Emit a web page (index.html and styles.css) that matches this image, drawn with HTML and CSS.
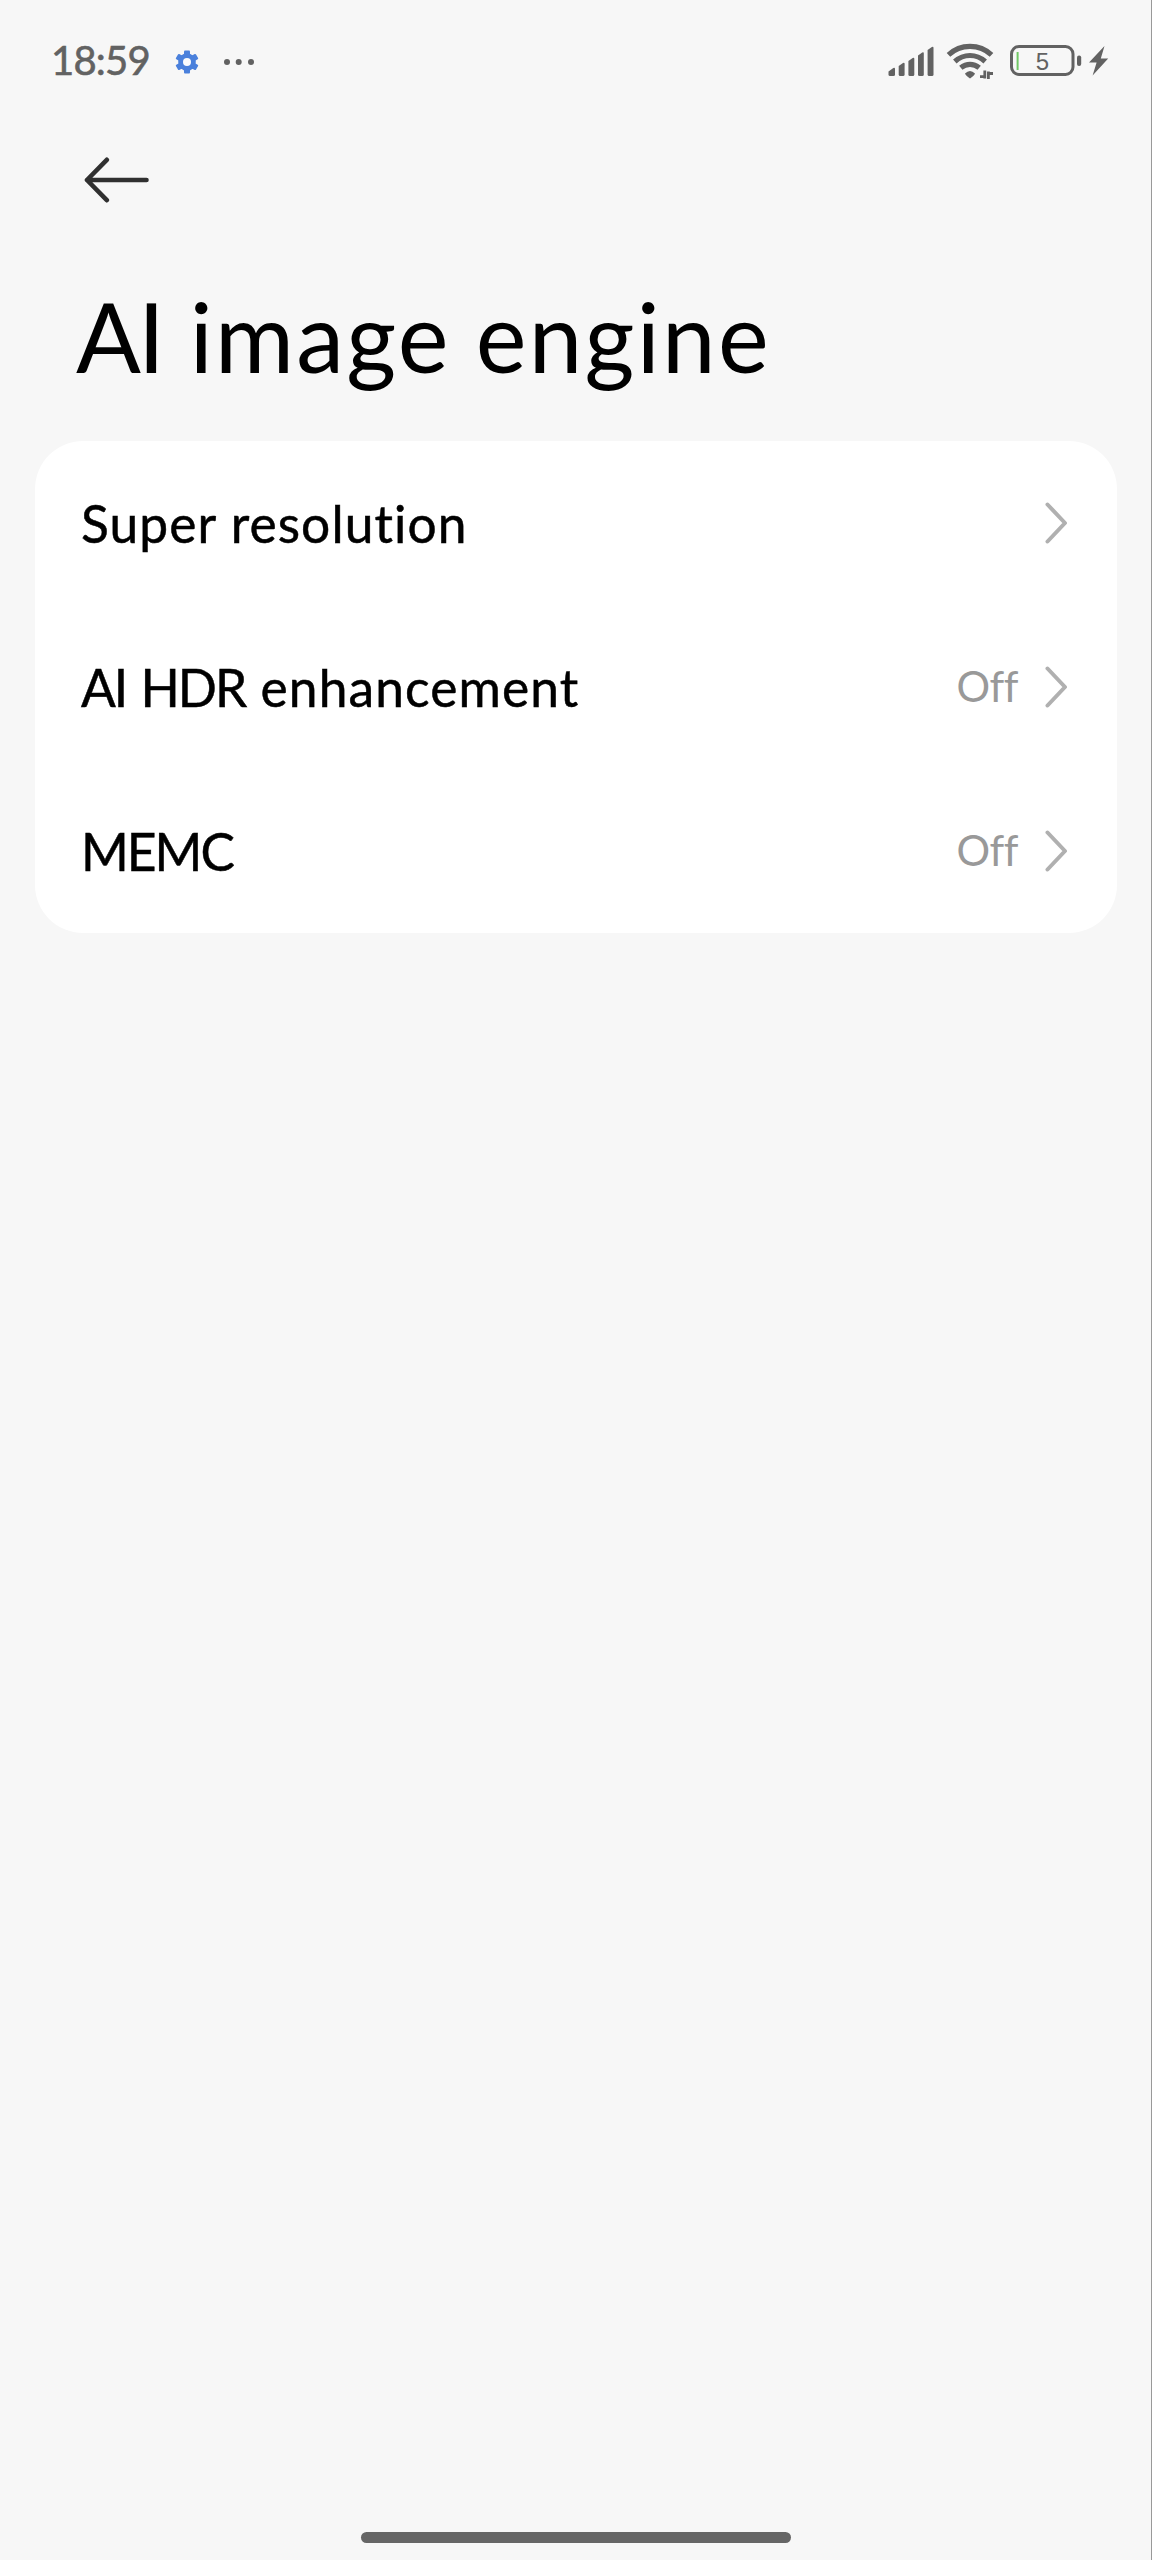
FILE: index.html
```html
<!doctype html>
<html lang="en">

<head>
  <meta charset="utf-8">
  <title>AI image engine</title>
  <link rel="stylesheet" href="styles.css">
</head>

<body>
  <div class="status">
    <span class="time">18:59</span>
    <svg class="gear" width="24" height="24" viewBox="-12 -12 24 24">
      <g fill="#4a80dc">
        <circle r="8.8"/>
        <rect x="-3" y="-11.6" width="6" height="23.2" rx="1"/>
        <rect x="-3" y="-11.6" width="6" height="23.2" rx="1" transform="rotate(60)"/>
        <rect x="-3" y="-11.6" width="6" height="23.2" rx="1" transform="rotate(120)"/>
      </g>
      <circle r="4" fill="#fafbfd"/>
    </svg>
    <svg class="more" width="32" height="8" viewBox="0 0 32 8" fill="#626262">
      <circle cx="4" cy="4" r="3"/><circle cx="15.7" cy="4" r="3"/><circle cx="28" cy="4" r="3"/>
    </svg>

    <svg class="signal" width="46" height="32" viewBox="0 0 46 32" fill="#626262">
      <path d="M0.5 26.5L5.3 23Q7 22 7 24V29.5Q7 31 5.5 31H2Q.5 31 .5 29.5Z"/>
      <path d="M10.700 21L15 18Q16.600 17.200 16.600 19V29.500Q16.600 31 15 31H12.200Q10.700 31 10.700 29.500Z"/>
      <path d="M20.400 16L24.700 13Q26.300 12.200 26.300 14V29.500Q26.300 31 24.800 31H21.900Q20.400 31 20.400 29.500Z"/>
      <path d="M30 10.500L34.200 7.500Q35.800 6.700 35.800 8.500V29.500Q35.800 31 34.300 31H31.500Q30 31 30 29.500Z"/>
      <path d="M39.600 5L43.900 2Q45.500 1.200 45.500 3V29.500Q45.500 31 44 31H41.100Q39.600 31 39.600 29.500Z"/>
    </svg>
    <svg class="wifi" width="48" height="38" viewBox="0 0 48 38" fill="none" stroke="#626262" stroke-width="5.2">
      <path d="M2.500 12.800Q11.500 4.300 24 4.300T45.500 12.800"/>
      <path d="M8.800 19.500Q15.500 13.500 24 13.500T39.200 19.500"/>
      <path d="M14.800 25.700Q19 22.300 24 22.300T33.200 25.700"/>
      <path d="M19 31.500Q24 26.500 29 31.500Q28.500 33.500 24 36.500Q19.500 33.500 19 31.500Z" fill="#626262" stroke="none"/>
      <path d="M38.800 28.500V36.500M34 34.600H38.800M42.400 37V29.500M42.400 31.500H47" stroke-width="2.800"/>
    </svg>
    <svg class="battery" width="72" height="32" viewBox="0 0 72 32">
      <rect x="1.500" y="1.500" width="61.500" height="28" rx="7.500" fill="none" stroke="#626262" stroke-width="3"/>
      <rect x="6.600" y="7" width="2" height="18" fill="#70c865"/>
      <rect x="67" y="10.500" width="4.200" height="10.500" rx="2" fill="#626262"/>
      <text x="32.500" y="24.500">5</text>
    </svg>
    <svg class="bolt" width="20" height="30" viewBox="0 0 20 30">
      <path d="M15.500 0L0 16.500H7.600L3.600 29.500L19.200 12.500H11.800Z" fill="#626262"/>
    </svg>
  </div>

  <div class="toolbar">
    <svg width="66" height="48" viewBox="0 0 66 48" fill="none" stroke="#303030" stroke-width="4.600" stroke-linecap="round" stroke-linejoin="round">
      <path d="M62.500 24H3M22.800 3.800L3 24L22.800 44.200"/>
    </svg>
  </div>

  <h1><span class="ai">AI</span> image engine</h1>

  <ul class="card">
    <li>
      <span class="label">Super resolution</span>
      <svg class="chevron" width="24" height="42" viewBox="0 0 24 42"><path d="M3.500 2.500L21 21L3.500 39.500"/></svg>
    </li>
    <li>
      <span class="label"><span class="caps">AI HDR</span> enhancement</span>
      <span class="value">Off</span>
      <svg class="chevron" width="24" height="42" viewBox="0 0 24 42"><path d="M3.500 2.500L21 21L3.500 39.500"/></svg>
    </li>
    <li>
      <span class="label"><span class="caps">MEMC</span></span>
      <span class="value">Off</span>
      <svg class="chevron" width="24" height="42" viewBox="0 0 24 42"><path d="M3.500 2.500L21 21L3.500 39.500"/></svg>
    </li>
  </ul>

  <div class="home-bar"></div>
</body>

</html>
```
FILE: styles.css
```css
* { box-sizing:border-box; }
html { background-color:#f7f7f7; }
body { display:flex; flex-direction:column; height:2560px; margin:0; border-right:1px solid #999; background-color:#f7f7f7; color:#000; font-family:Lato,"Noto Sans",sans-serif; font-variant-ligatures:none; overflow:hidden; }
svg { display:block; flex:none; }

.status { display:flex; align-items:flex-start; height:120px; padding:0 42px 0 51px; color:#626262; }
.time { width:124px; margin-top:36px; font-size:40px; line-height:48px; letter-spacing:-.8px; -webkit-text-stroke:.6px #626262; }
.gear { margin-top:50px; }
.more { margin:58px 0 0 24px; }
.signal { margin:45px 0 0 auto; }
.wifi { margin:42px 0 0 12px; }
.battery { margin:45px 0 0 16px; }
.battery text { fill:#626262; font:24px "Liberation Sans",sans-serif; text-anchor:middle; }
.bolt { margin:46px 0 0 7px; }

.toolbar { height:158px; padding:36px 0 0 84px; }
h1 { height:163px; margin:0; padding:0 0 0 76px; font-size:96px; font-weight:400; line-height:115px; letter-spacing:2.3px; word-spacing:-2px; white-space:nowrap; }
.ai { margin-right:3px; letter-spacing:-3px; }

.card { list-style:none; margin:0 34px 0 35px; padding:0; border-radius:48px; background-color:#fff; }
.card li { display:flex; align-items:center; height:164px; padding:0 49px 0 46px; }
.label { margin-right:auto; font-size:51.500px; line-height:62px; letter-spacing:1.1px; white-space:nowrap; -webkit-text-stroke:.5px #000; }
.caps { margin-right:1px; letter-spacing:-2px; word-spacing:3px; }
.value { margin-right:26px; padding-bottom:2px; color:#999; font-size:42px; line-height:50px; letter-spacing:-.5px; }
.chevron { fill:none; stroke:#b0b0b0; stroke-width:4; stroke-linecap:round; stroke-linejoin:round; }

.home-bar { width:430px; height:11px; margin:auto 0 17px 361px; border-radius:6px; background-color:#666; }
```
